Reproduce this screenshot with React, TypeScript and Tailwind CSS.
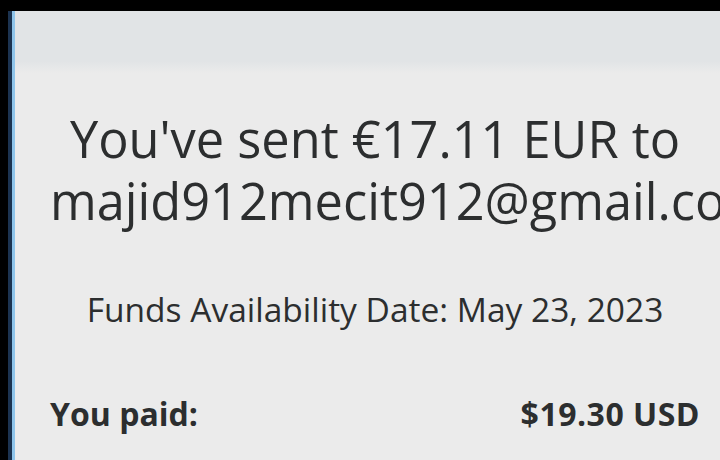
export default function App() {
  return (
    <div className="w-[720px] h-[460px] bg-black flex flex-col overflow-hidden" style={{ fontFamily: '"Open Sans", "Noto Sans", sans-serif' }}>
      <div className="h-[11px] shrink-0" />
      <div className="flex flex-1 min-h-0">
        {/* left edge */}
        <div className="w-[8px] bg-black" />
        <div className="w-[4px] bg-[#1c3350]" />
        <div className="w-[3px] bg-[#8ec4ea]" />

        {/* panel */}
        <div className="flex-1 overflow-hidden bg-[#ebebeb]">
          <div className="h-[50px] bg-[#e1e4e6]" />
          <div className="h-[12px] bg-gradient-to-b from-[#e1e4e6] to-[#ebebeb]" />

          <div className="pl-[35px] pr-[20px]">
            <h1 className="mt-[35px] text-center text-[50.5px] leading-[62px] text-[#2c2e2f]">
              You've sent €17.11 EUR to majid912mecit912@gmail.com
            </h1>

            <p className="mt-[57px] text-center text-[33.5px] leading-[40px] text-[#2c2e2f]">
              Funds Availability Date: May 23, 2023
            </p>

            <div className="mt-[65px] flex items-center justify-between text-[32px] leading-[40px] font-bold text-[#2c2e2f]">
              <span>You paid:</span>
              <span className="tracking-[0.5px]">$19.30 USD</span>
            </div>
          </div>
        </div>
      </div>
    </div>
  )
}
